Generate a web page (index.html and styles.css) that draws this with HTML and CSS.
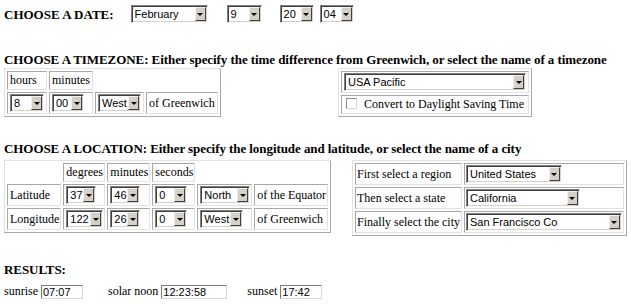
FILE: index.html
```html
<!DOCTYPE html>
<html>
<head>
    <meta charset="UTF-8">
    <title>Sunrise and sunset</title>
    <link rel="stylesheet" href="styles.css">
</head>
<body>
<div class="date-row">
    <b class="label">CHOOSE A DATE:</b>
    <span class="sel w77 gap-month"><span class="val">February</span><span class="btn"></span></span>
    <span class="sel w35 gap-day"><span class="val">9</span><span class="btn"></span></span>
    <span class="sel w34 gap-year"><span class="val">20</span><span class="btn"></span></span>
    <span class="sel w34 gap-small"><span class="val">04</span><span class="btn"></span></span>
</div>

<h2 class="head tz-head">CHOOSE A TIMEZONE: Either specify the time difference from Greenwich, or select the name of a timezone</h2>
<div class="pair tz-pair">
    <table class="grid">
        <tr><td>hours</td><td>minutes</td></tr>
        <tr>
            <td><span class="sel w34"><span class="val">8</span><span class="btn"></span></span></td>
            <td><span class="sel w32"><span class="val">00</span><span class="btn"></span></span></td>
            <td><span class="sel w43"><span class="val">West</span><span class="btn"></span></span></td>
            <td>of Greenwich</td>
        </tr>
    </table>
    <table class="grid">
        <tr><td><span class="sel w182"><span class="val">USA Pacific</span><span class="btn"></span></span></td></tr>
        <tr><td><span class="check"></span>Convert to Daylight Saving Time</td></tr>
    </table>
</div>

<h2 class="head loc-head">CHOOSE A LOCATION: Either specify the longitude and latitude, or select the name of a city</h2>
<div class="pair loc-pair">
    <table class="grid coords">
        <tr><td></td><td>degrees</td><td>minutes</td><td>seconds</td></tr>
        <tr>
            <td>Latitude</td>
            <td><span class="sel w30"><span class="val">37</span><span class="btn"></span></span></td>
            <td><span class="sel w30"><span class="val">46</span><span class="btn"></span></span></td>
            <td><span class="sel w32"><span class="val">0</span><span class="btn"></span></span></td>
            <td><span class="sel w50"><span class="val">North</span><span class="btn"></span></span></td>
            <td>of the Equator</td>
        </tr>
        <tr>
            <td>Longitude</td>
            <td><span class="sel w37"><span class="val">122</span><span class="btn"></span></span></td>
            <td><span class="sel w30"><span class="val">26</span><span class="btn"></span></span></td>
            <td><span class="sel w32"><span class="val">0</span><span class="btn"></span></span></td>
            <td><span class="sel w43"><span class="val">West</span><span class="btn"></span></span></td>
            <td>of Greenwich</td>
        </tr>
    </table>
    <table class="grid city">
        <tr>
            <td>First select a region</td>
            <td><span class="sel w96"><span class="val">United States</span><span class="btn"></span></span></td>
        </tr>
        <tr>
            <td>Then select a state</td>
            <td><span class="sel w114"><span class="val">California</span><span class="btn"></span></span></td>
        </tr>
        <tr>
            <td>Finally select the city</td>
            <td><span class="sel w156"><span class="val">San Francisco Co</span><span class="btn"></span></span></td>
        </tr>
    </table>
</div>

<h2 class="head res-head">RESULTS:</h2>
<div class="results">
    <span>sunrise</span><span class="field w42">07:07</span>
    <span class="gap-noon">solar noon</span><span class="field w66">12:23:58</span>
    <span class="gap-set">sunset</span><span class="field w42">17:42</span>
</div>
</body>
</html>
```

FILE: styles.css
```css
*{
    margin: 0;
    padding: 0;
}
body{
    padding: 5px 4px;
    font-family: "Liberation Serif", "Times New Roman", serif;
    font-size: 12px;
    line-height: 15px;
    color: #000;
    background: #fff;
}
.date-row{
    display: flex;
    align-items: center;
    height: 18px;
}
.label{
    font-size: 13px;
    font-weight: bold;
}
.gap-month{ margin-left: 17px; }
.gap-day{ margin-left: 19px; }
.gap-year{ margin-left: 18px; }
.gap-small{ margin-left: 6px; }

.head{
    font-size: 13px;
    font-weight: bold;
    letter-spacing: -0.07px;
}
.tz-head{
    margin-top: 29px;
    margin-bottom: 1px;
}
.loc-head{
    margin-top: 24px;
    margin-bottom: 4px;
}
.res-head{
    margin-top: 26px;
}

/*两张表并排*/
.pair{
    display: grid;
    align-items: start;
    justify-items: start;
}
.tz-pair{
    grid-template-columns: 334px auto;
}
.loc-pair{
    grid-template-columns: 348px auto;
}

.grid{
    border-collapse: separate;
    border-spacing: 2px;
    empty-cells: hide;
    border: 1px solid;
    border-color: #e2e2e2 #a8a8a8 #a8a8a8 #e2e2e2;
}
.grid td{
    border: 1px solid;
    border-color: #a8a8a8 #e2e2e2 #e2e2e2 #a8a8a8;
    padding: 1px 2px;
    white-space: nowrap;
    vertical-align: middle;
}
.coords td{
    padding: 1px 1px 1px 2px;
}
.city td{
    padding: 1px;
}

/*仿旧式下拉框*/
.sel{
    display: inline-flex;
    align-items: stretch;
    box-sizing: border-box;
    height: 18px;
    vertical-align: middle;
    border: 1px solid;
    border-color: #808080 #ffffff #ffffff #808080;
    box-shadow: inset 1px 1px 0 #404040, inset -1px -1px 0 #d4d0c8;
    padding: 1px;
    background: #fff;
    font-family: "Liberation Sans", Arial, sans-serif;
    font-size: 11px;
    line-height: 14px;
}
.sel .val{
    flex: 1;
    padding-left: 2px;
    overflow: hidden;
    white-space: nowrap;
}
.sel .btn{
    width: 11px;
    box-sizing: border-box;
    background: #d4d0c8;
    border: 1px solid;
    border-color: #f0f0f0 #404040 #404040 #f0f0f0;
    display: flex;
    align-items: center;
    justify-content: center;
}
.sel .btn::after{
    content: "";
    border-style: solid;
    border-width: 3px 3px 0;
    border-color: #000 transparent transparent;
}
.w30{ width: 30px; }
.w32{ width: 32px; }
.w34{ width: 34px; }
.w35{ width: 35px; }
.w37{ width: 37px; }
.w42{ width: 42px; }
.w43{ width: 43px; }
.w50{ width: 50px; }
.w66{ width: 66px; }
.w77{ width: 77px; }
.w96{ width: 96px; }
.w114{ width: 114px; }
.w156{ width: 156px; }
.w182{ width: 182px; }

.check{
    display: inline-block;
    width: 11px;
    height: 11px;
    box-sizing: border-box;
    border: 1px solid;
    border-color: #8a8a8a #d8d8d8 #d8d8d8 #8a8a8a;
    background: #fff;
    vertical-align: -1px;
    margin: 0 7px 0 2px;
}

.results{
    display: flex;
    align-items: center;
    margin-top: 7px;
}
.field{
    display: inline-block;
    box-sizing: border-box;
    height: 14px;
    margin-left: 3px;
    padding-left: 1px;
    border: 1px solid;
    border-color: #7a7a7a #d8d8d8 #d8d8d8 #7a7a7a;
    font-family: "Liberation Sans", Arial, sans-serif;
    font-size: 11px;
    line-height: 12px;
}
.gap-noon{
    margin-left: 25px;
}
.gap-set{
    margin-left: 20px;
}
```
